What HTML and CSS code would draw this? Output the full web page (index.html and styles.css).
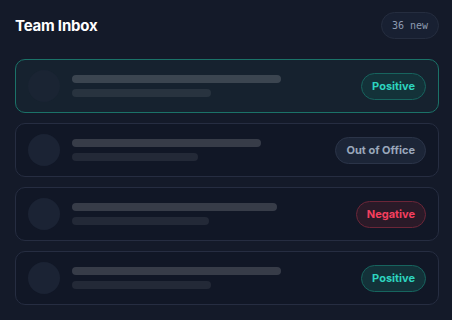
FILE: index.html
```html
<!DOCTYPE html>
<html>
<head>
<meta charset="utf-8">
<link rel="stylesheet" href="styles.css">
</head>
<body>
<div class="inbox">
  <div class="header">
    <h1 class="title">Team Inbox</h1>
    <span class="count">36 new</span>
  </div>
  <div class="list">
    <div class="card card-active">
      <div class="avatar"></div>
      <div class="lines">
        <div class="line line-main" style="width:209px"></div>
        <div class="line line-sub" style="width:139px"></div>
      </div>
      <span class="tag tag-pos">Positive</span>
    </div>
    <div class="card">
      <div class="avatar"></div>
      <div class="lines">
        <div class="line line-main" style="width:189px"></div>
        <div class="line line-sub" style="width:126px"></div>
      </div>
      <span class="tag tag-ooo">Out of Office</span>
    </div>
    <div class="card">
      <div class="avatar"></div>
      <div class="lines">
        <div class="line line-main" style="width:205px"></div>
        <div class="line line-sub" style="width:137px"></div>
      </div>
      <span class="tag tag-neg">Negative</span>
    </div>
    <div class="card">
      <div class="avatar"></div>
      <div class="lines">
        <div class="line line-main" style="width:209px"></div>
        <div class="line line-sub" style="width:139px"></div>
      </div>
      <span class="tag tag-pos">Positive</span>
    </div>
  </div>
</div>
</body>
</html>
```
FILE: styles.css
```css
* { box-sizing: border-box; }
html, body {
  margin: 0;
  padding: 0;
  background: #141a29;
  font-family: Inter, "Noto Sans", sans-serif;
}
.inbox {
  padding: 12px 13px 0 15px;
}
.header {
  display: flex;
  align-items: center;
  justify-content: space-between;
  height: 27px;
  margin-bottom: 20px;
}
.title {
  margin: 0;
  font-size: 15px;
  font-weight: 700;
  color: #ffffff;
  letter-spacing: -0.2px;
}
.count {
  height: 27px;
  display: flex;
  align-items: center;
  padding: 0 10px;
  border-radius: 14px;
  border: 1px solid #252d3f;
  background: #182032;
  font-family: "DejaVu Sans Mono", monospace;
  font-size: 10px;
  color: #8d9ab0;
}
.list {
  display: flex;
  flex-direction: column;
  gap: 10px;
}
.card {
  display: flex;
  align-items: center;
  height: 54px;
  padding: 0 12px;
  border: 1px solid #262d41;
  border-radius: 10px;
  background: #111726;
}
.card-active {
  background: #16222f;
  border-color: #1b7268;
}
.avatar {
  width: 32px;
  height: 32px;
  border-radius: 50%;
  background: #1b2334;
  flex: none;
}
.card-active .avatar {
  background: #1a2433;
}
.lines {
  flex: 1;
  display: flex;
  flex-direction: column;
  gap: 6px;
  margin-left: 12px;
}
.line {
  height: 8px;
  border-radius: 4px;
}
.line-main { background: rgba(255,255,255,0.16); }
.line-sub { background: rgba(255,255,255,0.08); }
.tag {
  flex: none;
  height: 27px;
  display: flex;
  align-items: center;
  padding: 0 10px;
  border-radius: 14px;
  font-size: 11px;
  font-weight: 700;
  border: 1px solid;
}
.tag-pos {
  color: #2dd4bf;
  background: #133239;
  border-color: #17645e;
}
.tag-ooo {
  color: #9aa7bb;
  background: #1c2537;
  border-color: #2b3448;
}
.tag-neg {
  color: #f43f5e;
  background: #2a1a28;
  border-color: #6b2638;
}
```
